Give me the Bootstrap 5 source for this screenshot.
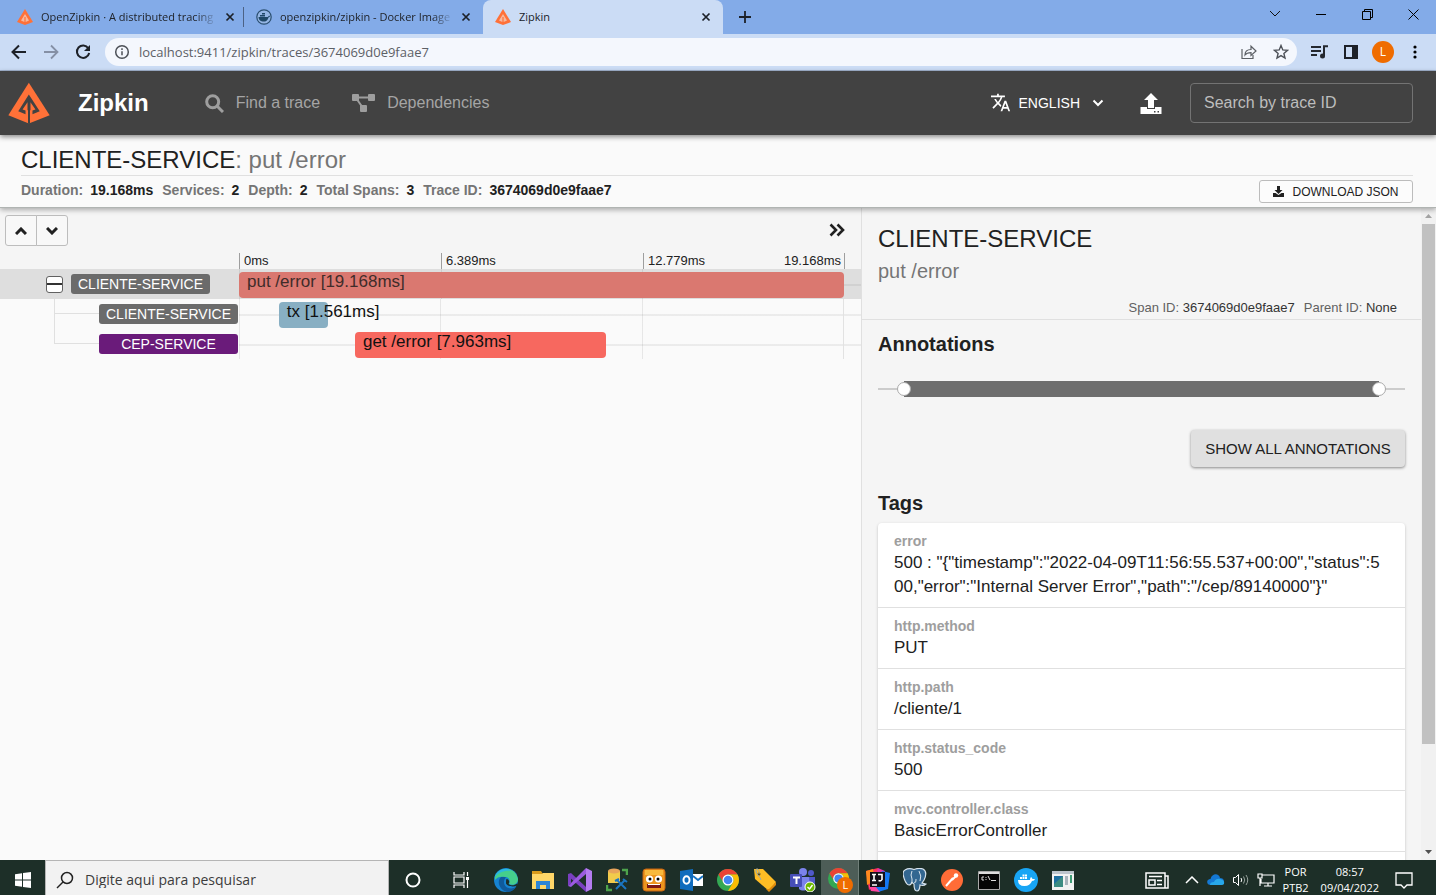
<!DOCTYPE html>
<html lang="en">
<head>
<meta charset="utf-8">
<meta name="viewport" content="width=device-width, initial-scale=1">
<title>Zipkin</title>
<link rel="stylesheet" href="https://cdn.jsdelivr.net/npm/bootstrap@5.3.0/dist/css/bootstrap.min.css">
<style>
  body { font-family: "Liberation Sans", Arial, sans-serif; color: #212121; background: #fafafa; font-size: 14px; line-height: 20px; }
  svg { display: block; flex: none; }
  .ui-font { font-family: "Open Sans", "Noto Sans", sans-serif; }
  button { color: inherit; }
  .plain { background: none; border: 0; padding: 0; }

  /* browser chrome */
  .tabstrip { background: #83abe8; height: 34px; font-size: 12px; padding-left: 5px; }
  .tab { width: 239px; padding: 0 8px 0 12px; }
  .tab-split { padding-right: 0; }
  .tab-active { width: 240px; background: #cbdcf5; border-radius: 8px 8px 0 0; }
  .tab-text { color: #20242b; text-decoration: none; overflow: hidden; white-space: nowrap; font-size: 11px; }
  .tab-fade { -webkit-mask-image: linear-gradient(to right, #000 88%, transparent); mask-image: linear-gradient(to right, #000 88%, transparent); }
  .tab-sep { border-right: 1px solid #4c6285; height: 20px; }
  .win-btn { width: 46px; height: 28px; }
  .addressbar { background: #cbdcf5; border-bottom: 1px solid #a3b4cf; height: 37px; padding: 0 5px 0 3px; }
  .tool { width: 32px; height: 28px; }
  .omnibox { background: #f4f7fd; border-radius: 14px; height: 28px; margin: 0 6px; }
  .omnibox input { border: 0; background: none; outline: 0; font-size: 13px; color: #5c6066; padding: 0; }
  .avatar { width: 22px; height: 22px; background: #ef6c00; color: #fff; font-size: 12px; }

  /* app bar */
  .appbar { background: #424242; height: 64px; padding: 0 23px 0 8px; box-shadow: 0 2px 5px rgba(0,0,0,.45); z-index: 3; }
  .brand { font-size: 24px; font-weight: 700; color: #fff; }
  .app-link { font-size: 16px; color: #a5a5a5; text-decoration: none; }
  .upload { margin: 0 24px 0 32px; padding: 0 4px; }
  .trace-input { width: 223px; height: 40px; background: transparent; border: 1px solid #737373; border-radius: 4px; color: #fff; font-size: 16px; padding: 0 13px; }
  .trace-input::placeholder { color: #bdbdbd; }

  /* trace summary */
  .summary { background: #fafafa; padding: 9px 23px 0 21px; height: 73px; border-bottom: 1px solid #b0b4b2; box-shadow: 0 2px 5px rgba(0,0,0,.3); z-index: 2; }
  .trace-title { font-size: 24px; line-height: 31px; margin: 0; font-weight: 400; }
  .muted { color: #757575; }
  .facts { font-weight: 700; color: #757575; gap: 9px; }
  .facts dt { font-weight: 700; }
  .facts dd { color: #212121; margin: 0 0 0 7px; }
  .rule { border-top: 1px solid #e0e0e0; }
  .download { width: 154px; height: 23px; font-size: 12px; background: #fcfcfc; border: 1px solid #bcbcbc; border-radius: 3px; padding: 0; }

  /* timeline */
  .main-area { flex: 1 1 0; min-height: 0; }
  .left-pane { flex: 3 1 0; }
  .right-pane { flex: 2 1 0; background: #f5f5f5; border-left: 1px solid #e0e0e0; }
  .tl-head { background: #f5f5f5; }
  .tl-tools { height: 45px; padding: 7px 16px 0 5px; }
  .step { width: 32px; height: 31px; background: #f8f8f8; border: 1px solid #bdbdbd; }
  .step:first-child { border-radius: 3px 0 0 3px; }
  .step:last-child { border-radius: 0 3px 3px 0; margin-left: -1px; }
  .name-col { width: 239px; flex: none; padding-right: 1px; }
  .root-col { padding-left: 46px; }
  .axis { display: grid; grid-template-columns: repeat(3, minmax(0, 1fr)); margin-right: 16px; font-size: 13px; line-height: 16px; }
  .axis div { border-left: 1px solid #9e9e9e; padding-left: 4px; }
  .axis div:last-child { border-right: 1px solid #9e9e9e; padding-right: 3px; }
  .span-row { height: 30px; }
  .span-row.selected { background: #dedede; }
  .chip { width: 139px; height: 20px; line-height: 20px; border-radius: 3px; color: #fff; background: #6b6b6b; text-align: center; }
  .chip-cep { background: #6a1b7a; }
  .toggle { width: 17px; height: 17px; background: #fff; border: 1px solid #616161; border-radius: 3px; }
  .branch { width: 45px; border-left: 1px solid #e0e0e0; }
  .branch div { height: 15px; border-bottom: 1px solid #e0e0e0; }
  .branch-last { width: 45px; height: 15px; border-left: 1px solid #e0e0e0; border-bottom: 1px solid #e0e0e0; }
  .lane { background: linear-gradient(rgba(0,0,0,.06), rgba(0,0,0,.06)) 0 15px / 100% 2px no-repeat; padding-right: 17px; }
  .lane-grid { height: 30px; padding-top: 3px; background: repeating-linear-gradient(to right, rgba(0,0,0,.08) 0 1px, transparent 1px 33.3333%); border-right: 1px solid #e2e2e2; }
  .selected .lane-grid { border-right: 0; }
  .span-bar { height: 26px; border-radius: 4px; padding-left: 8px; font-size: 17px; line-height: 20px; white-space: nowrap; color: #111; }
  .bar-selected { background: #da7870; color: #402c2a; }
  .bar-error { background: #f7685f; }
  .bar-plain { background: #88afc3; }

  /* span detail */
  .detail { padding: 0 16px; }
  .detail h2 { font-size: 24px; line-height: 30px; margin: 0; font-weight: 400; padding-top: 16px; }
  .sub { font-size: 20px; line-height: 24px; margin-top: 5px; }
  .ids { font-size: 13px; line-height: 16px; margin-top: 17px; padding-right: 8px; gap: 9px; color: #616161; }
  .ids b { font-weight: 400; color: #333; }
  .detail-rule { border-top: 1px solid #e0e0e0; margin: 3px -16px 0; }
  .detail h3 { font-size: 20px; line-height: 24px; font-weight: 700; margin: 0; }
  .track { height: 16px; margin: 25px 0 33px; }
  .track-line { height: 2px; width: 5%; background: #ccc; }
  .track-fill { height: 16px; background: #6e6e6e; }
  .knob { width: 14px; height: 14px; border-radius: 50%; border: 1px solid #aaa; background: #fff; margin: 0 -7px; z-index: 1; }
  .show-all { width: 214px; height: 37px; border-radius: 4px; background: #e0e0e0; border: 0; padding: 0; font-size: 15px; box-shadow: 0 1px 3px rgba(0,0,0,.45); }
  .tags { margin: 8px 0 0; background: #fff; border-radius: 4px 4px 0 0; box-shadow: 0 1px 3px rgba(0,0,0,.22); }
  .tag-item { padding: 8px 16px; border-bottom: 1px solid #e0e0e0; }
  .tag-item dt { color: #9e9e9e; font-weight: 700; }
  .tag-item dd { margin: 0; font-size: 17px; line-height: 24px; word-break: break-all; }
  .scroll-col { width: 15px; background: #f1f1f1; }
  .scroll-end { height: 16px; }
  .scroll-thumb { flex: 519 1 0; background: #c1c1c1; margin: 0 1px; }
  .scroll-rest { flex: 100 1 0; }

  /* taskbar */
  .taskbar { background: #1d2f28; height: 35px; color: #fff; font-size: 11px; line-height: 16px; z-index: 4; }
  .taskbar > * { height: 40px; }
  .start { width: 45px; }
  .task-search { width: 344px; background: #f2f2f2; border: 1px solid #b5b5b5; padding: 0 10px; gap: 11px; }
  .task-search input { border: 0; background: none; outline: 0; font-size: 14px; color: #3c3c3c; padding: 0; width: 250px; }
  .task-search input::placeholder { color: #3c3c3c; }
  .task-btn { width: 48px; }
  .apps { flex: 0 1 595px; margin-left: 2px; }
  .apps button { flex: 1 1 0; min-width: 0; }
  .app-running { background: #4d5d57; border-right: 1px solid #71807a; }
  .tray { padding-right: 23px; }
</style>
</head>
<body class="d-flex flex-column vh-100 overflow-hidden">

<svg width="0" height="0" class="position-absolute" aria-hidden="true">
  <symbol id="logo" viewBox="12 14 127 124">
    <path fill="#ff7138" d="M75 15 138 113 75 138 13 113Z"/>
    <path fill="#424242" d="M75 50 108 101 86 110V99L95 96 80 74V98H71V74L56 96 65 99V110L43 101Z"/>
    <path fill="#424242" d="M72.500 64H78.500V139H72.500Z"/>
  </symbol>
  <symbol id="fav" viewBox="0 0 16 16"><path fill="#ff7138" d="M8 0 16 13 8 16 0 13Z"/><path fill="#f5b9a0" d="M8 5 12 11.500 8.600 13V8H7.400V13L4 11.500Z"/></symbol>
  <symbol id="cross" viewBox="0 0 10 10"><path d="M1.500 1.500l7 7m0-7l-7 7" stroke="#1c2129" stroke-width="1.700" fill="none"/></symbol>
  <symbol id="chrome" viewBox="0 0 24 24">
    <circle cx="12" cy="12" r="11" fill="#34a853"/>
    <path fill="#ea4335" d="M2.500 6.500A11 11 0 0 1 21.500 6.500H12A5.500 5.500 0 0 0 7 14Z"/>
    <path fill="#fbbc04" d="M21.500 6.500A11 11 0 0 1 12 23L17 14.500A5.500 5.500 0 0 0 12 6.500Z"/>
    <circle cx="12" cy="12" r="5.500" fill="#fff"/><circle cx="12" cy="12" r="4.300" fill="#4285f4"/>
  </symbol>
</svg>

<nav class="tabstrip ui-font d-flex flex-shrink-0" aria-label="Browser tabs">
  <div class="tab tab-split d-flex align-items-center">
    <svg width="16" height="16"><use href="#fav"/></svg>
    <a class="tab-text tab-fade flex-fill ms-2" href="#">OpenZipkin · A distributed tracing</a>
    <button class="plain ms-2 me-2" aria-label="Close"><svg width="10" height="10"><use href="#cross"/></svg></button>
    <span class="tab-sep"></span>
  </div>
  <div class="tab d-flex align-items-center">
    <svg width="16" height="16" viewBox="0 0 16 16"><circle cx="8" cy="8" r="7.200" fill="#94b5e4" stroke="#2b4f70" stroke-width="1.200"/><path fill="#1f4766" d="M2.500 8H12c.5-1 1-1.500 2-1-.2 1-.8 1.400-1.500 1.500C11.500 12 9 13 6.500 12.500 4 12.200 2.600 10.500 2.500 8ZM4 6h5v1.500H4ZM6 4h3v1.500H6Z"/></svg>
    <a class="tab-text tab-fade flex-fill ms-2" href="#">openzipkin/zipkin - Docker Image</a>
    <button class="plain ms-2 me-1" aria-label="Close"><svg width="10" height="10"><use href="#cross"/></svg></button>
  </div>
  <div class="tab tab-active d-flex align-items-center">
    <svg width="16" height="16"><use href="#fav"/></svg>
    <a class="tab-text flex-fill ms-2" href="#" aria-current="page">Zipkin</a>
    <button class="plain ms-2 me-1" aria-label="Close"><svg width="10" height="10"><use href="#cross"/></svg></button>
  </div>
  <button class="plain ms-3" aria-label="New tab"><svg width="12" height="12" viewBox="0 0 12 12"><path d="M6 0v12M0 6h12" stroke="#1c2129" stroke-width="1.800"/></svg></button>
  <div class="d-flex ms-auto">
    <button class="plain win-btn d-flex align-items-center justify-content-center" aria-label="Search tabs"><svg width="12" height="8" viewBox="0 0 12 8" fill="none" stroke="#111"><path d="M1 1l5 5 5-5"/></svg></button>
    <button class="plain win-btn d-flex align-items-center justify-content-center" aria-label="Minimize"><svg width="10" height="10" viewBox="0 0 10 10"><path d="M0 5h10v1H0z"/></svg></button>
    <button class="plain win-btn d-flex align-items-center justify-content-center" aria-label="Restore"><svg width="11" height="11" viewBox="0 0 11 11" fill="none" stroke="#000"><path d="M.5 2.500h8v8h-8zM2.500 2.500v-2h8v8h-2"/></svg></button>
    <button class="plain win-btn d-flex align-items-center justify-content-center" aria-label="Close window"><svg width="11" height="11" viewBox="0 0 11 11" stroke="#000"><path d="M.5.5l10 10m0-10l-10 10"/></svg></button>
  </div>
</nav>

<div class="addressbar ui-font d-flex align-items-center flex-shrink-0">
  <button class="plain tool d-flex align-items-center justify-content-center" aria-label="Back"><svg width="16" height="16" viewBox="0 0 16 16" fill="none" stroke="#1d2128" stroke-width="2"><path d="M15 8H2M8 1.500 1.500 8 8 14.500"/></svg></button>
  <button class="plain tool d-flex align-items-center justify-content-center" aria-label="Forward"><svg width="16" height="16" viewBox="0 0 16 16" fill="none" stroke="#8590a5" stroke-width="1.800"><path d="M1 8h13M8 1.500 14.500 8 8 14.500"/></svg></button>
  <button class="plain tool d-flex align-items-center justify-content-center" aria-label="Reload"><svg width="16" height="16" viewBox="0 0 16 16"><path d="M13.300 4.200A6.200 6.200 0 1 0 14.200 9" fill="none" stroke="#1d2128" stroke-width="2"/><path fill="#1d2128" d="M15 1v6H9z"/></svg></button>
  <div class="omnibox d-flex align-items-center flex-fill">
    <svg class="ms-2 me-2" width="18" height="18" viewBox="-1 -1 18 18" fill="none" stroke="#4d5158" stroke-width="1.500"><circle cx="8" cy="8" r="6.300"/><path d="M8 7.200v4M8 4.300v1.600"/></svg>
    <input class="flex-fill" aria-label="Address" value="localhost:9411/zipkin/traces/3674069d0e9faae7">
    <button class="plain tool d-flex align-items-center justify-content-center" aria-label="Share"><svg width="16" height="16" viewBox="0 0 16 16" fill="none" stroke="#5c6066" stroke-width="1.200"><path d="M1 5v9.500h11V11M4 11c0-4 2.500-5.500 6-5.500V2.200L15 7l-5 4.500V8.700C7.500 8.700 5.500 9 4 11Z"/></svg></button>
    <button class="plain tool d-flex align-items-center justify-content-center" aria-label="Bookmark"><svg width="16" height="16" viewBox="0 0 16 16" fill="none" stroke="#4d5158" stroke-width="1.400"><path d="M8 1.500l1.800 4.400 4.700.4-3.600 3.100 1.100 4.700L8 11.600l-4 2.500 1.100-4.700L1.500 6.300l4.700-.4Z"/></svg></button>
  </div>
  <button class="plain tool d-flex align-items-center justify-content-center" aria-label="Media"><svg width="17" height="14" viewBox="0 0 17 14"><path d="M0 2h10M0 6h10M0 10h6" stroke="#24282f" stroke-width="1.800"/><path d="M13 11V1.200h4" fill="none" stroke="#24282f" stroke-width="2"/><circle cx="11.500" cy="11" r="2.500" fill="#24282f"/></svg></button>
  <button class="plain tool d-flex align-items-center justify-content-center" aria-label="Side panel"><svg width="14" height="14" viewBox="0 0 14 14"><path fill="#1d2128" fill-rule="evenodd" d="M0 0h14v14H0zM2 2v10h6V2z"/></svg></button>
  <button class="plain tool d-flex align-items-center justify-content-center" aria-label="Profile"><span class="avatar rounded-circle d-flex align-items-center justify-content-center">L</span></button>
  <button class="plain tool d-flex align-items-center justify-content-center" aria-label="Menu"><svg width="4" height="14" viewBox="0 0 4 14"><circle cx="2" cy="2" r="1.600"/><circle cx="2" cy="7" r="1.600"/><circle cx="2" cy="12" r="1.600"/></svg></button>
</div>

<header class="appbar d-flex align-items-center position-relative flex-shrink-0">
  <svg width="42" height="42"><use href="#logo"/></svg>
  <span class="brand ms-4 me-5 ps-1">Zipkin</span>
  <a class="app-link d-flex align-items-center ms-2" href="#"><svg class="me-2" width="19" height="19" viewBox="0 0 19 19" fill="none" stroke="#9e9e9e" stroke-width="3"><circle cx="7.700" cy="7.700" r="6"/><path d="M12 12l6 6"/></svg><span class="ms-1">Find a trace</span></a>
  <a class="app-link d-flex align-items-center ms-4 ps-2" href="#"><svg class="me-2" width="23" height="18" viewBox="0 0 23 18"><g fill="#9e9e9e"><rect width="7" height="7" rx="1"/><rect x="16" width="7" height="7" rx="1"/><rect x="8" y="11" width="7" height="7" rx="1"/></g><path d="M4 3.500h14M4 4l7 10" stroke="#9e9e9e" stroke-width="2"/></svg><span class="ms-1">Dependencies</span></a>
  <button class="plain text-white d-flex align-items-center ms-auto">
    <svg width="20" height="20" viewBox="1 1 23 23" fill="#fff"><path d="M12.870 15.070l-2.540-2.510.03-.03A17.500 17.500 0 0 0 14.070 6H17V4h-7V2H8v2H1v2h11.170C11.500 7.920 10.440 9.750 9 11.350 8.070 10.320 7.300 9.190 6.690 8h-2c.73 1.630 1.730 3.170 2.980 4.560l-5.090 5.020L4 19l5-5 3.110 3.110.76-2.040zM18.500 10h-2L12 22h2l1.120-3h4.750L21 22h2l-4.500-12zm-2.620 7l1.620-4.330L19.120 17h-3.240z"/></svg>
    <span class="mx-2">ENGLISH</span>
    <svg class="ms-1" width="12" height="8" viewBox="0 0 12 8" fill="none" stroke="#fff" stroke-width="2"><path d="M1.500 1.500 6 6l4.500-4.500"/></svg>
  </button>
  <button class="plain upload" aria-label="Upload JSON"><svg width="22" height="21" viewBox="0 0 22 21"><path fill="#fff" d="M11 0l7 7h-4v8H8V7H4zM.5 14H7v2h8v-2h6.500v7H.5z"/><path stroke="#424242" stroke-width="1.500" d="M14 18.700h1.500m2 0H19"/></svg></button>
  <input class="trace-input" placeholder="Search by trace ID" aria-label="Search by trace ID">
</header>

<section class="summary position-relative flex-shrink-0">
  <h1 class="trace-title">CLIENTE-SERVICE<span class="muted">: put /error</span></h1>
  <div class="rule d-flex justify-content-between">
    <dl class="facts d-flex mb-0 pt-1">
      <div class="d-flex"><dt>Duration:</dt><dd>19.168ms</dd></div>
      <div class="d-flex"><dt>Services:</dt><dd>2</dd></div>
      <div class="d-flex"><dt>Depth:</dt><dd>2</dd></div>
      <div class="d-flex"><dt>Total Spans:</dt><dd>3</dd></div>
      <div class="d-flex"><dt>Trace ID:</dt><dd>3674069d0e9faae7</dd></div>
    </dl>
    <button class="download d-flex align-items-center justify-content-center mt-1"><svg class="me-2" width="11" height="11" viewBox="0 0 11 11"><path fill="#212121" d="M4 0h3v4h2.500l-4 4-4-4H4zM0 7h2.500l3 2 3-2H11v4H0z"/></svg>DOWNLOAD JSON</button>
  </div>
</section>

<main class="main-area d-flex overflow-hidden">
  <section class="left-pane overflow-hidden">
    <div class="tl-head">
      <div class="tl-tools d-flex justify-content-between">
        <div class="d-flex">
          <button class="step d-flex align-items-center justify-content-center p-0" aria-label="Previous"><svg width="12" height="8" viewBox="0 0 12 8" fill="none" stroke="#212121" stroke-width="3"><path d="M1 7l5-5 5 5"/></svg></button>
          <button class="step d-flex align-items-center justify-content-center p-0" aria-label="Next"><svg width="12" height="8" viewBox="0 0 12 8" fill="none" stroke="#212121" stroke-width="3"><path d="M1 1l5 5 5-5"/></svg></button>
        </div>
        <button class="plain mb-2" aria-label="Hide detail"><svg width="16" height="14" viewBox="0 0 16 14" fill="none" stroke="#212121" stroke-width="2.600"><path d="M1.500 1.500 7 7l-5.500 5.500M8.500 1.500 14 7l-5.500 5.500"/></svg></button>
      </div>
      <div class="d-flex">
        <div class="name-col"></div>
        <div class="axis flex-fill">
          <div>0ms</div><div>6.389ms</div><div class="d-flex justify-content-between"><span>12.779ms</span><span>19.168ms</span></div>
        </div>
      </div>
    </div>
    <div class="span-row selected d-flex">
      <div class="name-col root-col d-flex align-items-center"><button class="toggle d-flex align-items-center p-0 me-2" aria-label="Collapse"><svg width="15" height="2"><path fill="#333" d="M0 0h15v2H0z"/></svg></button><span class="chip">CLIENTE-SERVICE</span></div>
      <div class="lane flex-fill"><div class="lane-grid"><div class="span-bar bar-selected" style="width:100%">put /error [19.168ms]</div></div></div>
    </div>
    <div class="span-row d-flex">
      <div class="name-col d-flex align-items-center justify-content-end"><div class="branch align-self-stretch"><div></div></div><span class="chip">CLIENTE-SERVICE</span></div>
      <div class="lane flex-fill"><div class="lane-grid"><div class="span-bar bar-plain" style="margin-left:6.6%;width:8.1%">tx [1.561ms]</div></div></div>
    </div>
    <div class="span-row d-flex">
      <div class="name-col d-flex align-items-center justify-content-end"><div class="branch-last align-self-start"></div><span class="chip chip-cep">CEP-SERVICE</span></div>
      <div class="lane flex-fill"><div class="lane-grid"><div class="span-bar bar-error" style="margin-left:19.2%;width:41.5%">get /error [7.963ms]</div></div></div>
    </div>
  </section>

  <aside class="right-pane d-flex overflow-hidden">
    <div class="detail flex-fill overflow-hidden">
      <h2>CLIENTE-SERVICE</h2>
      <div class="sub muted">put /error</div>
      <div class="ids d-flex justify-content-end"><span>Span ID: <b>3674069d0e9faae7</b></span><span>Parent ID: <b>None</b></span></div>
      <div class="detail-rule mb-2"></div>
      <h3 class="pt-1">Annotations</h3>
      <div class="track d-flex align-items-center"><span class="track-line"></span><span class="knob"></span><span class="track-fill flex-fill"></span><span class="knob"></span><span class="track-line"></span></div>
      <div class="d-flex justify-content-end mb-4"><button class="show-all">SHOW ALL ANNOTATIONS</button></div>
      <h3>Tags</h3>
      <dl class="tags">
        <div class="tag-item"><dt>error</dt><dd>500 : "{"timestamp":"2022-04-09T11:56:55.537+00:00","status":500,"error":"Internal Server Error","path":"/cep/89140000"}"</dd></div>
        <div class="tag-item"><dt>http.method</dt><dd>PUT</dd></div>
        <div class="tag-item"><dt>http.path</dt><dd>/cliente/1</dd></div>
        <div class="tag-item"><dt>http.status_code</dt><dd>500</dd></div>
        <div class="tag-item"><dt>mvc.controller.class</dt><dd>BasicErrorController</dd></div>
        <div class="tag-item"></div>
      </dl>
    </div>
    <div class="scroll-col d-flex flex-column flex-shrink-0">
      <div class="scroll-end d-flex align-items-center justify-content-center"><svg width="7" height="4"><path fill="#a3a3a3" d="M3.500 0 7 4H0z"/></svg></div>
      <div class="scroll-thumb"></div><div class="scroll-rest"></div>
      <div class="scroll-end d-flex align-items-center justify-content-center"><svg width="7" height="4"><path fill="#505050" d="M3.500 4 7 0H0z"/></svg></div>
    </div>
  </aside>
</main>

<footer class="taskbar ui-font d-flex overflow-hidden flex-shrink-0">
  <button class="plain start d-flex align-items-center justify-content-center" aria-label="Start"><svg width="16" height="16" viewBox="0 0 16 16" fill="#fff"><path d="M0 2.200 7 1.200V7.500H0zM8 1l8-1v7.500H8zM0 8.500h7v6.300l-7-1zM8 8.500h8V16l-8-1z"/></svg></button>
  <div class="task-search d-flex align-items-center">
    <svg width="18" height="18" viewBox="0 0 18 18" fill="none" stroke="#222" stroke-width="1.500"><circle cx="11" cy="7" r="5.500"/><path d="M7 11l-6 6"/></svg>
    <input placeholder="Digite aqui para pesquisar" aria-label="Pesquisar">
  </div>
  <button class="plain task-btn d-flex align-items-center justify-content-center" aria-label="Cortana"><svg width="16" height="16"><circle cx="8" cy="8" r="6.500" fill="none" stroke="#fff" stroke-width="2"/></svg></button>
  <button class="plain task-btn d-flex align-items-center justify-content-center" aria-label="Task view"><svg width="17" height="16" viewBox="0 0 17 16" fill="none" stroke="#fff" stroke-width="1.200"><path d="M1 0v3h10V0M1 16v-3h10v3M1 5h10v6H1zM14.500 0v4M14.500 8v8"/><path fill="#fff" stroke="none" d="M13 5h3v3h-3z"/></svg></button>
  <div class="apps d-flex">
    <button class="plain d-flex align-items-center justify-content-center" aria-label="Edge"><svg width="24" height="24" viewBox="0 0 24 24"><circle cx="12" cy="12" r="12" fill="#1683d1"/><path fill="#45cf8c" d="M1 9C4-1 21-3 24 11c0 5-5 7-9 5 2-3 0-7-4-7-4-1-8 0-10 3Z"/><path fill="#2bb8e0" d="M.3 10C3 0 14-1 17 3 12 2 4 4 .3 10Z"/><path fill="#0f5a9c" d="M7 9c-5 5-1 13 6 15 4 0 7-2 9-5-5 3-12 1-12-5 0-2 1-4 2-5Z"/><path fill="#1d2f28" d="M14.500 16c2.500 2 6 1.500 8.500-.5l1 2c-5 2-10 1-12-2 0-2 0-4 .5-4.500 2.500 0 3.500 3 2 5Z"/></svg></button>
    <button class="plain d-flex align-items-center justify-content-center" aria-label="Explorer"><svg width="22" height="20" viewBox="0 0 22 20"><path fill="#d99b1c" d="M0 1h9l2 3H0z"/><path fill="#ffd768" d="M0 4l10 0 1-1h11v16H0z"/><path fill="#2e86d6" d="M4 19v-8h14v8h-4v-4H8v4z"/></svg></button>
    <button class="plain d-flex align-items-center justify-content-center" aria-label="Visual Studio"><svg width="24" height="24" viewBox="0 0 24 24"><path fill="#7a3fc0" d="M0 6l3-1L18 19v5L0 8z"/><path fill="#9b5be0" d="M0 18l18-18v6L3 19l-3-1z"/><path fill="#7a3fc0" d="M0 6l3 2v8l-3 2z"/><path fill="#b47cf0" d="M18 0l6 3v18l-6 3z"/></svg></button>
    <button class="plain d-flex align-items-center justify-content-center" aria-label="SQL tools"><svg width="22" height="24" viewBox="0 0 22 24"><path fill="#f2cb4b" d="M2 3h12v12H2z"/><ellipse cx="8" cy="3" rx="6" ry="2.500" fill="#e9a55b"/><path fill="none" stroke="#4ea34c" stroke-width="2.500" d="M16 2h5v5M1 17v5h5"/><path stroke="#1b75c0" stroke-width="2" d="M10 21l9-9M11 12l9 9M9 13l4-2M17 11l4 3"/></svg></button>
    <button class="plain d-flex align-items-center justify-content-center" aria-label="Mascot"><svg width="24" height="24" viewBox="0 0 24 24"><rect x="1" y="1" width="22" height="22" rx="3" fill="#ed961e" stroke="#c76510"/><path fill="#f8b93c" d="M3 2h18v5H3z"/><circle cx="7.500" cy="11" r="3.600" fill="#fff"/><circle cx="16.500" cy="11" r="3.600" fill="#fff"/><circle cx="8" cy="11" r="1.500"/><circle cx="16" cy="11" r="1.500"/><path fill="#7c1815" d="M5 16h14v4H5z"/><path fill="#fff" d="M6 16h12v1H6z"/></svg></button>
    <button class="plain d-flex align-items-center justify-content-center" aria-label="Outlook"><svg width="23" height="22" viewBox="0 0 23 22"><path fill="#fff" d="M12 5h11v12H12z"/><path stroke="#1472c4" stroke-width="1.800" fill="none" d="M13 7l5 4 5-4"/><path fill="#0f6cbd" d="M0 2l13-2v22L0 20z"/><ellipse cx="6.500" cy="11" rx="3" ry="3.800" fill="none" stroke="#fff" stroke-width="2"/></svg></button>
    <button class="plain d-flex align-items-center justify-content-center" aria-label="Chrome"><svg width="24" height="24"><use href="#chrome"/></svg></button>
    <button class="plain d-flex align-items-center justify-content-center" aria-label="Tags"><svg width="24" height="24" viewBox="0 0 24 24"><path fill="#ffbd25" d="M1 1l9 0 13 13-7 9L2 11z"/><path fill="#de8a0c" d="M23 14v3l-7 7-3-3 3 0z"/><circle cx="6" cy="6" r="1.500" fill="#61501b"/><path d="M6 6c1-4-3-8-3-3 0 4 5 6 5 9" stroke="#9aa" fill="none"/></svg></button>
    <button class="plain d-flex align-items-center justify-content-center" aria-label="Teams"><svg width="26" height="24" viewBox="0 0 26 24"><circle cx="13" cy="4" r="4" fill="#7b83eb"/><circle cx="21" cy="5" r="3" fill="#5059c9"/><path fill="#7b83eb" d="M9 9h11v9a7 7 0 0 1-11 3z"/><path fill="#5059c9" d="M19 9h6v8l-5 3z"/><rect y="6" width="12" height="13" rx="1" fill="#464eb8"/><path stroke="#fff" stroke-width="2" d="M3 9.500h7M6.500 9v7"/><circle cx="20" cy="19" r="5" fill="#6bb700" stroke="#fff"/><path d="M17.500 19l2 2 3-4" fill="none" stroke="#fff" stroke-width="1.400"/></svg></button>
    <button class="plain app-running d-flex align-items-center justify-content-center" aria-label="Chrome window"><svg width="26" height="26" viewBox="0 0 26 26"><use href="#chrome" width="23" height="23"/><circle cx="18" cy="18" r="8" fill="#ef6c00"/><text x="15.500" y="22" font-size="11" fill="#fff">L</text></svg></button>
    <button class="plain d-flex align-items-center justify-content-center" aria-label="IntelliJ IDEA"><svg width="24" height="24" viewBox="0 0 24 24"><path fill="#fe315d" d="M0 3l12-3 4 12L3 22z"/><path fill="#ff8a1e" d="M0 3l7-2 2 12-8 4z"/><path fill="#e034a5" d="M12 0l7 3-4 10H8z"/><path fill="#1478f5" d="M16 3l8 2-2 16-10 3-3-6z"/><path fill="#fe45a0" d="M3 18l6 0 5 6-9-1z"/><path fill="#141018" d="M4 4h15v15H4z"/><path stroke="#fff" stroke-width="1.600" fill="none" d="M6 6.500h4M8 6.500v6M6 12.500h4M12 6.500h4v5q-1 2-3.500 1M6 17h5"/></svg></button>
    <button class="plain d-flex align-items-center justify-content-center" aria-label="PostgreSQL"><svg width="24" height="24" viewBox="0 0 24 24"><path fill="#336791" stroke="#d7e3ec" stroke-width="1.200" d="M2 2q4-2.500 9-.5 5-2 9-.5 5 3 1 11l-2 3 4 1q-2 2-6 1-.3 6-3 6-3 0-3-7-2-1-2-2-1 3-3 3-4-1-6-11 0-3 2-4Z"/><path fill="none" stroke="#d7e3ec" d="M9 3q-2 4 0 8v4M16 3q3 5 1 10M11 14q2 2 2-3"/></svg></button>
    <button class="plain d-flex align-items-center justify-content-center" aria-label="Postman"><svg width="22" height="22" viewBox="0 0 22 22"><circle cx="11" cy="11" r="11" fill="#ff6c37"/><path d="M5 17l7-8M11 11l5-5" stroke="#fff" stroke-width="2"/><circle cx="15" cy="6.500" r="2.200" fill="#fff"/></svg></button>
    <button class="plain d-flex align-items-center justify-content-center" aria-label="Command prompt"><svg width="22" height="19" viewBox="0 0 22 19"><path fill="#050505" stroke="#aaa" d="M.5.5h21v18H.5z"/><path fill="#ddd" d="M1 1h20v2H1z"/><path stroke="#ddd" fill="none" d="M6 6H4v3h2M8 6v1m0 1v1M10 5l2 4M13 9.500h5"/></svg></button>
    <button class="plain d-flex align-items-center justify-content-center" aria-label="Docker"><svg width="24" height="24" viewBox="0 0 24 24"><circle cx="12" cy="12" r="12" fill="#18a5f5"/><path fill="#fff" d="M4 12h12q0-2 1-3 1 .5 1.500 2H21q-.5 2-3 2-2 5-7.500 5Q4 18 4 12ZM6 9h2v2H6zm2.500 0h2v2h-2zm2.500 0h2v2h-2zM8.500 6.500h2v2h-2zm2.500 0h2v2h-2z"/></svg></button>
    <button class="plain d-flex align-items-center justify-content-center" aria-label="Application"><svg width="22" height="19" viewBox="0 0 22 19"><path fill="#f2f2f2" d="M0 0h22v19H0z"/><path fill="#bcc4cc" d="M0 0h22v3H0z"/><path fill="#3d8c82" d="M2 5h9v11H2z"/><path fill="#1d6fa0" d="M2 5h9L2 13z"/><path fill="#a9b4bc" d="M13 5h3v9h-3z"/><path fill="#3f9d77" d="M18 4h2v8h-2z"/></svg></button>
  </div>
  <div class="tray d-flex align-items-center ms-auto">
    <svg class="me-3" width="24" height="17" viewBox="0 0 24 17" fill="none" stroke="#fff" stroke-width="1.500"><path d="M1 1h19v15H1zM20 4h3v12h-4M4 4.500h13M4 8h6v5H4zM12 8.500h5M12 12.500h5"/></svg>
    <svg class="me-2" width="14" height="8" viewBox="0 0 14 8" fill="none" stroke="#fff" stroke-width="1.500"><path d="M1 7l6-6 6 6"/></svg>
    <svg class="me-2" width="18" height="12" viewBox="0 0 18 12"><path fill="#1478d4" d="M4 11C-1 11-1 5 3.500 5 5-1 12-1 13 4c4 0 4 3 4 4z"/><path fill="#28a8ea" d="M3 11q0-3 4-3 2-4 6-3 5 1 4 5-1 1-2 1Z"/></svg>
    <svg class="me-2" width="16" height="14" viewBox="0 0 16 14" fill="none" stroke="#fff"><path d="M.5 4.500h2l3-3v11l-3-3h-2zM8 5q1.500 2 0 4"/><path stroke="#9aa5a0" d="M10.500 3.500q2.500 3.500 0 7M13 2q3.500 5 0 10"/></svg>
    <svg class="me-2" width="18" height="14" viewBox="0 0 18 14" fill="none" stroke="#fff" stroke-width="1.200"><path d="M5 2h12v8H4V6M11 10v3M7 13h8M1 1h4v4H1zM3 5v8"/></svg>
    <div class="text-center me-2">POR<br>PTB2</div>
    <div class="text-center me-3 ms-1">08:57<br>09/04/2022</div>
    <svg width="18" height="17" viewBox="0 0 18 17" fill="none" stroke="#fff" stroke-width="1.300"><path d="M1 1h16v12h-5l-3 3-3-3H1z"/></svg>
  </div>
</footer>
<script src="https://cdn.jsdelivr.net/npm/bootstrap@5.3.0/dist/js/bootstrap.bundle.min.js"></script>
</body>
</html>
